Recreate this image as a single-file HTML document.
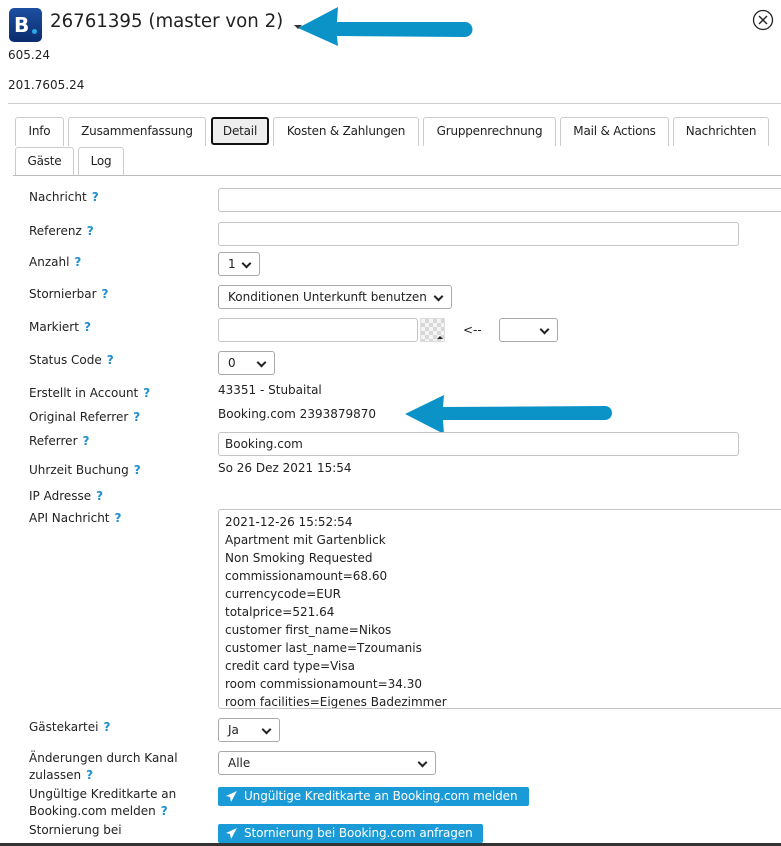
<!DOCTYPE html>
<html><head><meta charset="utf-8"><style>
*{box-sizing:border-box;margin:0;padding:0}
body{width:781px;height:846px;overflow:hidden;background:#fff;position:relative;font-family:"DejaVu Sans","Liberation Sans",sans-serif;font-size:12px;color:#222;letter-spacing:0}
.a{position:absolute;white-space:nowrap;line-height:14px}
.q{color:#1e8fcf;font-weight:bold;margin-left:5px}
.in{position:absolute;border:1px solid #c4c4c4;border-radius:3px;background:#fff;height:24px}
.sel{position:absolute;border:1px solid #a9a9a9;border-radius:3px;background:#fff;height:24px;padding-left:9px;line-height:22px}
.sel:after{content:"";position:absolute;right:9px;top:7px;width:5px;height:5px;border-right:2px solid #222;border-bottom:2px solid #222;transform:rotate(45deg)}
.tab{position:absolute;border:1px solid #ccc;border-bottom:none;border-radius:3px 3px 0 0;height:29px;text-align:center;line-height:27px;background:#fff;letter-spacing:-0.2px}
.btn{position:absolute;background:#1a9ad6;color:#fff;border-radius:2px;height:19px;line-height:19px;padding-left:26px;letter-spacing:-0.1px}
.btn svg{position:absolute;left:8px;top:4px}
</style></head><body>
<div style="position:absolute;left:9px;top:8px;width:33px;height:34px;border-radius:5px;background:linear-gradient(#1d4fa0,#0b2c6e)"></div>
<div class="a" style="left:14px;top:14px;color:#fff;font-weight:bold;font-size:20px;line-height:22px;letter-spacing:0">B</div>
<div style="position:absolute;left:32px;top:29px;width:5px;height:5px;border-radius:50%;background:#2aa9e8"></div>
<div class="a" style="left:50px;top:11px;font-size:18.2px;line-height:22px;letter-spacing:0">26761395 (master von 2)</div>
<div style="position:absolute;left:294px;top:25px;border-left:4px solid transparent;border-right:4px solid transparent;border-top:4px solid #333"></div>
<svg style="position:absolute;left:0;top:0" width="781" height="846"><path d="M298 28 L338 7 L337 22 L465 22 A7.5 7.5 0 0 1 465 37 L337 36 L338 46 Z" fill="#0b93c8"/><path d="M405 414 L444 395 L443 407 L605 406 A7 7 0 0 1 605 420 L443 420 L444 434 Z" fill="#0b93c8"/><circle cx="763" cy="20" r="9.5" fill="none" stroke="#222" stroke-width="1.3"/><path d="M759 16 L767 24 M767 16 L759 24" stroke="#222" stroke-width="1.4"/></svg>
<div class="a" style="left:8px;top:48px">605.24</div>
<div class="a" style="left:8px;top:78px">201.7605.24</div>
<div style="position:absolute;left:8px;top:103px;width:773px;height:1px;background:#ccc"></div>
<div class="tab" style="left:15px;top:117px;width:49px">Info</div>
<div class="tab" style="left:68px;top:117px;width:138px">Zusammenfassung</div>
<div class="tab" style="left:211px;top:117px;width:58px;border:2px solid #111;border-radius:3px;background:#eee;height:28px;line-height:24px">Detail</div>
<div class="tab" style="left:273px;top:117px;width:146px">Kosten &amp; Zahlungen</div>
<div class="tab" style="left:423px;top:117px;width:133px">Gruppenrechnung</div>
<div class="tab" style="left:560px;top:117px;width:109px">Mail &amp; Actions</div>
<div class="tab" style="left:673px;top:117px;width:96px">Nachrichten</div>
<div class="tab" style="left:15px;top:147px;width:59px">Gäste</div>
<div class="tab" style="left:78px;top:147px;width:46px">Log</div>
<div style="position:absolute;left:13px;top:175px;width:768px;height:1px;background:#bbb"></div>

<div class="a" style="left:29px;top:190px">Nachricht<span class="q">?</span></div>
<div class="in" style="left:218px;top:188px;width:580px"></div>
<div class="a" style="left:29px;top:224px">Referenz<span class="q">?</span></div>
<div class="in" style="left:218px;top:222px;width:521px"></div>
<div class="a" style="left:29px;top:255px">Anzahl<span class="q">?</span></div>
<div class="sel" style="left:218px;top:252px;width:42px">1</div>
<div class="a" style="left:29px;top:287px">Stornierbar<span class="q">?</span></div>
<div class="sel" style="left:218px;top:285px;width:234px">Konditionen Unterkunft benutzen</div>
<div class="a" style="left:29px;top:320px">Markiert<span class="q">?</span></div>
<div class="in" style="left:218px;top:318px;width:200px"></div>
<div style="position:absolute;left:420px;top:318px;width:25px;height:24px;border:1px solid #ddd;background:repeating-conic-gradient(#d8d8d8 0 25%,#f4f4f4 0 50%) 0 0/8px 8px"></div>
<div style="position:absolute;left:437px;top:336px;border-left:3px solid transparent;border-right:3px solid transparent;border-bottom:3px solid #222"></div>
<div class="a" style="left:463px;top:323px">&lt;--</div>
<div class="sel" style="left:499px;top:318px;width:59px"></div>
<div class="a" style="left:29px;top:353px">Status Code<span class="q">?</span></div>
<div class="sel" style="left:218px;top:351px;width:57px">0</div>
<div class="a" style="left:29px;top:386px">Erstellt in Account<span class="q">?</span></div>
<div class="a" style="left:218px;top:383px">43351 - Stubaital</div>
<div class="a" style="left:29px;top:410px">Original Referrer<span class="q">?</span></div>
<div class="a" style="left:218px;top:407px">Booking.com 2393879870</div>
<div class="a" style="left:29px;top:434px">Referrer<span class="q">?</span></div>
<div class="in" style="left:218px;top:432px;width:521px;padding-left:6px;line-height:22px">Booking.com</div>
<div class="a" style="left:29px;top:463px">Uhrzeit Buchung<span class="q">?</span></div>
<div class="a" style="left:218px;top:461px">So 26 Dez 2021 15:54</div>
<div class="a" style="left:29px;top:489px">IP Adresse<span class="q">?</span></div>
<div class="a" style="left:29px;top:511px">API Nachricht<span class="q">?</span></div>
<div style="position:absolute;left:218px;top:509px;width:580px;height:200px;border:1px solid #c4c4c4;border-radius:3px;padding:3px 6px;line-height:18px;white-space:pre;overflow:hidden">2021-12-26 15:52:54
Apartment mit Gartenblick
Non Smoking Requested
commissionamount=68.60
currencycode=EUR
totalprice=521.64
customer first_name=Nikos
customer last_name=Tzoumanis
credit card type=Visa
room commissionamount=34.30
room facilities=Eigenes Badezimmer</div>
<div class="a" style="left:29px;top:720px">Gästekartei<span class="q">?</span></div>
<div class="sel" style="left:218px;top:718px;width:62px">Ja</div>
<div class="a" style="left:29px;top:750px;line-height:17px">Änderungen durch Kanal<br>zulassen<span class="q">?</span></div>
<div class="sel" style="left:218px;top:751px;width:218px">Alle</div>
<div class="a" style="left:29px;top:786px;line-height:17px">Ungültige Kreditkarte an<br>Booking.com melden<span class="q">?</span></div>
<div class="btn" style="left:218px;top:787px;width:311px"><svg width="11" height="11" viewBox="0 0 11 11"><path d="M11 0 L0 5 L4 6 L5 11 Z" fill="#fff"/></svg>Ungültige Kreditkarte an Booking.com melden</div>
<div class="a" style="left:29px;top:823px">Stornierung bei</div>
<div class="btn" style="left:218px;top:824px;width:265px"><svg width="11" height="11" viewBox="0 0 11 11"><path d="M11 0 L0 5 L4 6 L5 11 Z" fill="#fff"/></svg>Stornierung bei Booking.com anfragen</div>
<div style="position:absolute;left:0;top:843px;width:781px;height:3px;background:#333"></div>
</body></html>
